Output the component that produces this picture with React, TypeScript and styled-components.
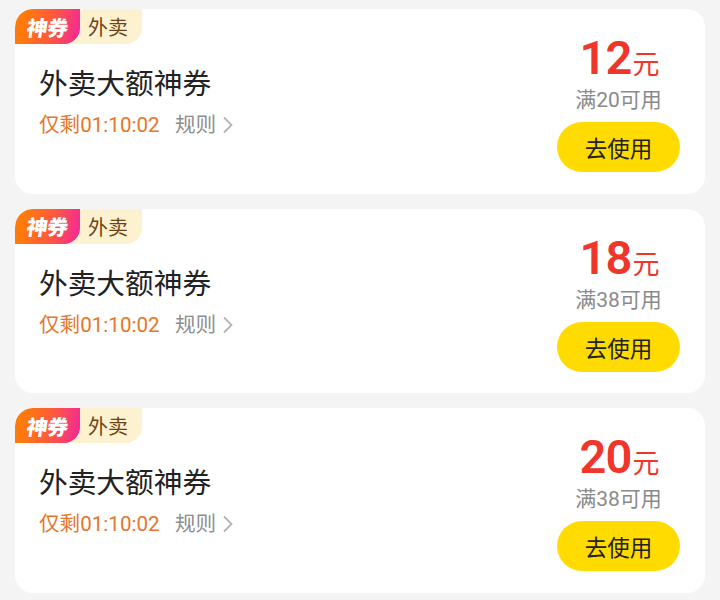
import React from 'react';
import styled, { createGlobalStyle } from 'styled-components';

const GlobalStyle = createGlobalStyle`
  html, body {
    margin: 0;
    padding: 0;
    background: #f4f4f4;
    font-family: "Roboto", "Noto Sans CJK SC", sans-serif;
  }
`;

const Page = styled.div`
  width: 720px;
  height: 600px;
  box-sizing: border-box;
  padding: 9px 15px 0;
  display: flex;
  flex-direction: column;
  gap: 15px;
  overflow: hidden;
`;

const Card = styled.div`
  height: 184.5px;
  background: #fff;
  border-radius: 18px;
  display: flex;
  justify-content: space-between;
  overflow: hidden;
`;

const Left = styled.div`
  display: flex;
  flex-direction: column;
  align-items: flex-start;
`;

const Tags = styled.div`
  display: flex;
  height: 35px;
  background: #fdf2cf;
  border-bottom-right-radius: 16px;
`;

const BrandTag = styled.div`
  width: 65px;
  display: flex;
  align-items: center;
  justify-content: center;
  background: linear-gradient(100deg, #ff7a0a 15%, #ff5a3c 55%, #f2259c 100%);
  border-radius: 18px 0 16px 0;
  color: #fff;
  font-size: 21px;
  font-weight: 900;
  letter-spacing: -0.5px;
`;

const BrandText = styled.span`
  display: inline-block;
  transform: skewX(-8deg);
`;

const CategoryTag = styled.div`
  width: 62px;
  box-sizing: border-box;
  padding-left: 8px;
  display: flex;
  align-items: center;
  color: #6d4316;
  font-size: 20px;
`;

const Title = styled.div`
  margin: 20px 0 0 24px;
  font-size: 28.7px;
  line-height: 40px;
  color: #222;
`;

const Meta = styled.div`
  margin: 6px 0 0 24px;
  display: flex;
  align-items: center;
  font-size: 20.6px;
  line-height: 30px;
`;

const Countdown = styled.span`
  color: #e5762b;
  width: 136px;
`;

const Rules = styled.span`
  color: #8e8e8e;
  display: flex;
  align-items: center;
  gap: 6px;
`;

const Right = styled.div`
  width: 123px;
  margin-right: 25px;
  display: flex;
  flex-direction: column;
  align-items: center;
`;

const Price = styled.div`
  margin-top: 20px;
  padding-left: 2px;
  display: flex;
  align-items: baseline;
  color: #f0352a;
  height: 57px;
  line-height: 57px;
`;

const Amount = styled.span`
  font-size: 47px;
  font-weight: 600;
  letter-spacing: -0.8px;
`;

const Unit = styled.span`
  font-size: 27px;
  margin-left: 1px;
`;

const Threshold = styled.div`
  font-size: 21px;
  line-height: 28px;
  color: #8a8a8a;
`;

const UseButton = styled.button`
  margin-top: 8px;
  width: 123px;
  height: 50px;
  border: none;
  border-radius: 25px;
  background: #ffdb00;
  color: #222;
  font-family: inherit;
  font-size: 22.5px;
  padding: 0;
`;

const Chevron = () => (
  <svg width="12" height="18" viewBox="0 0 12 18" fill="none">
    <path d="M2 1.5l7.5 7.5L2 16.5" stroke="#b4b4b4" strokeWidth="1.8" />
  </svg>
);

const coupons = [
  { amount: 12, threshold: '满20可用' },
  { amount: 18, threshold: '满38可用' },
  { amount: 20, threshold: '满38可用' },
];

const App: React.FC = () => (
  <>
    <GlobalStyle />
    <Page>
      {coupons.map((coupon, i) => (
        <Card key={i}>
          <Left>
            <Tags>
              <BrandTag>
                <BrandText>神券</BrandText>
              </BrandTag>
              <CategoryTag>外卖</CategoryTag>
            </Tags>
            <Title>外卖大额神券</Title>
            <Meta>
              <Countdown>仅剩01:10:02</Countdown>
              <Rules>
                规则
                <Chevron />
              </Rules>
            </Meta>
          </Left>
          <Right>
            <Price>
              <Amount>{coupon.amount}</Amount>
              <Unit>元</Unit>
            </Price>
            <Threshold>{coupon.threshold}</Threshold>
            <UseButton>去使用</UseButton>
          </Right>
        </Card>
      ))}
    </Page>
  </>
);

export default App;
